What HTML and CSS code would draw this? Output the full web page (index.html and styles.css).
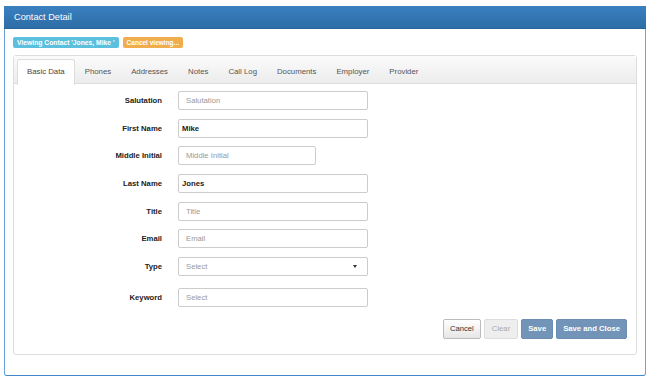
FILE: index.html
```html
<!DOCTYPE html>
<html lang="en">
<head>
  <meta charset="UTF-8" />
  <title>Contact Detail</title>
  <link rel="stylesheet" href="styles.css">
</head>
<body>

<div class="panel">
  <div class="panel-heading">Contact Detail</div>
  <div class="panel-body">

    <div class="badges">
      <span class="badge badge-info">Viewing Contact 'Jones, Mike '</span>
      <span class="badge badge-warning">Cancel viewing...</span>
    </div>

    <div class="tabbox">
      <ul class="tabs">
        <li class="tab active">Basic Data</li>
        <li class="tab">Phones</li>
        <li class="tab">Addresses</li>
        <li class="tab">Notes</li>
        <li class="tab">Call Log</li>
        <li class="tab">Documents</li>
        <li class="tab">Employer</li>
        <li class="tab">Provider</li>
      </ul>

      <div class="tab-content">
        <form class="form">
          <label class="form-label">Salutation</label>
          <input class="form-input" type="text" placeholder="Salutation">

          <label class="form-label">First Name</label>
          <input class="form-input has-value" type="text" value="Mike">

          <label class="form-label">Middle Initial</label>
          <input class="form-input short" type="text" placeholder="Middle Initial">

          <label class="form-label">Last Name</label>
          <input class="form-input has-value" type="text" value="Jones">

          <label class="form-label">Title</label>
          <input class="form-input" type="text" placeholder="Title">

          <label class="form-label">Email</label>
          <input class="form-input" type="text" placeholder="Email">

          <label class="form-label">Type</label>
          <div class="form-input select">
            <span>Select</span>
            <span class="caret"></span>
          </div>

          <label class="form-label keyword">Keyword</label>
          <input class="form-input keyword" type="text" placeholder="Select">
        </form>

        <div class="actions">
          <button class="btn btn-default">Cancel</button>
          <button class="btn btn-disabled">Clear</button>
          <button class="btn btn-primary">Save</button>
          <button class="btn btn-primary">Save and Close</button>
        </div>
      </div>
    </div>

  </div>
</div>

</body>
</html>
```

FILE: styles.css
```css
body {
  margin: 0;
  padding: 6px 5px 0 4px;
  font-family: "Liberation Sans", Arial, sans-serif;
  color: #333;
  background: #fff;
}

.panel {
  width: 640px;
  height: 368px;
  border: 1px solid #6aa3d8;
  border-bottom-color: #3f87c8;
  border-radius: 3px;
  display: flex;
  flex-direction: column;
}
.panel-heading {
  height: 22px;
  line-height: 22px;
  padding-left: 10px;
  font-size: 9.2px;
  color: #fff;
  background: linear-gradient(#3a80c0, #2e6da6);
  border-bottom: 1px solid #2a64a0;
  margin: -1px -1px 0 -1px;
}
.panel-body {
  padding: 8px 8px 0 8px;
}

.badges {
  display: flex;
  gap: 4px;
  margin-bottom: 7px;
}
.badge {
  height: 11px;
  line-height: 11px;
  padding: 0 4px;
  font-size: 6.75px;
  font-weight: bold;
  color: #fff;
  border-radius: 2px;
}
.badge-info {
  background-color: #5bc0de;
}
.badge-warning {
  background-color: #f0ad4e;
  font-size: 6.5px;
}

.tabbox {
  height: 298px;
  border: 1px solid #ddd;
  border-radius: 3px;
  display: flex;
  flex-direction: column;
}
.tabs {
  list-style: none;
  margin: 0;
  padding: 3px 3px 0 3px;
  height: 24px;
  display: flex;
  background: linear-gradient(#fbfbfb, #ececec);
  border-bottom: 1px solid #ddd;
}
.tab {
  height: 24px;
  line-height: 24px;
  padding: 0 9px;
  font-size: 7.8px;
  color: #555;
  border: 1px solid transparent;
  border-bottom: none;
  border-radius: 3px 3px 0 0;
}
.tab.active {
  background: #fff;
  border-color: #ddd;
  color: #444;
  margin-bottom: -1px;
  height: 25px;
}

.tab-content {
  flex: 1;
  display: flex;
  flex-direction: column;
  padding-top: 7px;
}
.form {
  display: grid;
  grid-template-columns: 148px 190px;
  column-gap: 16px;
  row-gap: 8.7px;
  align-items: center;
}
.form-label {
  text-align: right;
  font-size: 7.7px;
  font-weight: bold;
  color: #222;
}
.form-input {
  box-sizing: border-box;
  height: 19px;
  width: 190px;
  margin: 0;
  padding: 0 7px;
  font-family: inherit;
  font-size: 7.7px;
  color: #222;
  background: #fff;
  border: 1px solid #ccc;
  border-radius: 2px;
  outline: none;
}
.form-input::placeholder {
  color: #999;
}
.form-input.has-value {
  padding-left: 3px;
  font-weight: bold;
}
.form-input.short {
  width: 138px;
}
.form-input.select {
  display: flex;
  align-items: center;
  justify-content: space-between;
  color: #999;
  padding-right: 10px;
}
.caret {
  width: 0;
  height: 0;
  border-left: 2.5px solid transparent;
  border-right: 2.5px solid transparent;
  border-top: 3px solid #333;
}
.keyword {
  margin-top: 3px;
}

.actions {
  display: flex;
  justify-content: flex-end;
  gap: 3px;
  padding-right: 9px;
  margin-top: 12px;
}
.btn {
  height: 20px;
  padding: 0 6px;
  font-family: inherit;
  font-size: 7.7px;
  border-radius: 2px;
  border: 1px solid #ccc;
}
.btn-default {
  color: #333;
  background: linear-gradient(#fff, #e6e6e6);
  border-color: #bbb;
}
.btn-disabled {
  color: #aaa;
  background: #eee;
  border-color: #ddd;
  padding: 0 7px;
}
.btn-primary {
  color: #fff;
  font-weight: bold;
  background: #7194b8;
  border-color: #6a8db1;
}
```
